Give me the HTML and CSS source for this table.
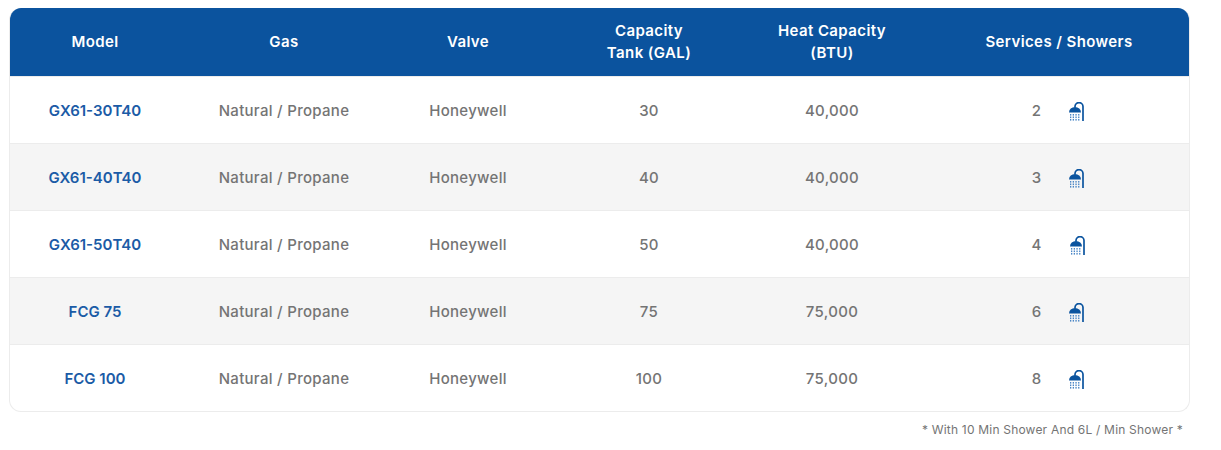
FILE: index.html
```html
<!DOCTYPE html>
<html>
<head>
<meta charset="utf-8">
<link rel="stylesheet" href="styles.css">
</head>
<body>
<div class="wrap">
  <div class="card">
    <div class="row head">
      <div class="cell">Model</div>
      <div class="cell">Gas</div>
      <div class="cell">Valve</div>
      <div class="cell">Capacity<br>Tank (GAL)</div>
      <div class="cell">Heat Capacity<br>(BTU)</div>
      <div class="cell svc">Services / Showers</div>
    </div>
    <div class="row">
      <div class="cell model">GX61-30T40</div>
      <div class="cell">Natural / Propane</div>
      <div class="cell">Honeywell</div>
      <div class="cell">30</div>
      <div class="cell">40,000</div>
      <div class="cell svc"><span class="num">2</span><svg class="shower" viewBox="0 0 18 19" width="18" height="19"><path d="M7 5.5V4.6a4 4 0 0 1 8 0V19" fill="none" stroke="#0b549f" stroke-width="1.7"/><path d="M1 10.5a6 5.5 0 0 1 12 0z" fill="#0b549f"/><g fill="#4a86c6"><rect x="2" y="12" width="1.3" height="1.6"/><rect x="4.7" y="12" width="1.3" height="1.6"/><rect x="7.4" y="12" width="1.3" height="1.6"/><rect x="10.1" y="12" width="1.3" height="1.6"/><rect x="2" y="14.5" width="1.3" height="1.6"/><rect x="4.7" y="14.5" width="1.3" height="1.6"/><rect x="7.4" y="14.5" width="1.3" height="1.6"/><rect x="10.1" y="14.5" width="1.3" height="1.6"/><rect x="2" y="17" width="1.3" height="1.6"/><rect x="4.7" y="17" width="1.3" height="1.6"/><rect x="7.4" y="17" width="1.3" height="1.6"/><rect x="10.1" y="17" width="1.3" height="1.6"/></g></svg></div>
    </div>
    <div class="row alt">
      <div class="cell model">GX61-40T40</div>
      <div class="cell">Natural / Propane</div>
      <div class="cell">Honeywell</div>
      <div class="cell">40</div>
      <div class="cell">40,000</div>
      <div class="cell svc"><span class="num">3</span><svg class="shower" viewBox="0 0 18 19" width="18" height="19"><path d="M7 5.5V4.6a4 4 0 0 1 8 0V19" fill="none" stroke="#0b549f" stroke-width="1.7"/><path d="M1 10.5a6 5.5 0 0 1 12 0z" fill="#0b549f"/><g fill="#4a86c6"><rect x="2" y="12" width="1.3" height="1.6"/><rect x="4.7" y="12" width="1.3" height="1.6"/><rect x="7.4" y="12" width="1.3" height="1.6"/><rect x="10.1" y="12" width="1.3" height="1.6"/><rect x="2" y="14.5" width="1.3" height="1.6"/><rect x="4.7" y="14.5" width="1.3" height="1.6"/><rect x="7.4" y="14.5" width="1.3" height="1.6"/><rect x="10.1" y="14.5" width="1.3" height="1.6"/><rect x="2" y="17" width="1.3" height="1.6"/><rect x="4.7" y="17" width="1.3" height="1.6"/><rect x="7.4" y="17" width="1.3" height="1.6"/><rect x="10.1" y="17" width="1.3" height="1.6"/></g></svg></div>
    </div>
    <div class="row">
      <div class="cell model">GX61-50T40</div>
      <div class="cell">Natural / Propane</div>
      <div class="cell">Honeywell</div>
      <div class="cell">50</div>
      <div class="cell">40,000</div>
      <div class="cell svc"><span class="num">4</span><svg class="shower" viewBox="0 0 18 19" width="18" height="19"><path d="M7 5.5V4.6a4 4 0 0 1 8 0V19" fill="none" stroke="#0b549f" stroke-width="1.7"/><path d="M1 10.5a6 5.5 0 0 1 12 0z" fill="#0b549f"/><g fill="#4a86c6"><rect x="2" y="12" width="1.3" height="1.6"/><rect x="4.7" y="12" width="1.3" height="1.6"/><rect x="7.4" y="12" width="1.3" height="1.6"/><rect x="10.1" y="12" width="1.3" height="1.6"/><rect x="2" y="14.5" width="1.3" height="1.6"/><rect x="4.7" y="14.5" width="1.3" height="1.6"/><rect x="7.4" y="14.5" width="1.3" height="1.6"/><rect x="10.1" y="14.5" width="1.3" height="1.6"/><rect x="2" y="17" width="1.3" height="1.6"/><rect x="4.7" y="17" width="1.3" height="1.6"/><rect x="7.4" y="17" width="1.3" height="1.6"/><rect x="10.1" y="17" width="1.3" height="1.6"/></g></svg></div>
    </div>
    <div class="row alt">
      <div class="cell model">FCG 75</div>
      <div class="cell">Natural / Propane</div>
      <div class="cell">Honeywell</div>
      <div class="cell">75</div>
      <div class="cell">75,000</div>
      <div class="cell svc"><span class="num">6</span><svg class="shower" viewBox="0 0 18 19" width="18" height="19"><path d="M7 5.5V4.6a4 4 0 0 1 8 0V19" fill="none" stroke="#0b549f" stroke-width="1.7"/><path d="M1 10.5a6 5.5 0 0 1 12 0z" fill="#0b549f"/><g fill="#4a86c6"><rect x="2" y="12" width="1.3" height="1.6"/><rect x="4.7" y="12" width="1.3" height="1.6"/><rect x="7.4" y="12" width="1.3" height="1.6"/><rect x="10.1" y="12" width="1.3" height="1.6"/><rect x="2" y="14.5" width="1.3" height="1.6"/><rect x="4.7" y="14.5" width="1.3" height="1.6"/><rect x="7.4" y="14.5" width="1.3" height="1.6"/><rect x="10.1" y="14.5" width="1.3" height="1.6"/><rect x="2" y="17" width="1.3" height="1.6"/><rect x="4.7" y="17" width="1.3" height="1.6"/><rect x="7.4" y="17" width="1.3" height="1.6"/><rect x="10.1" y="17" width="1.3" height="1.6"/></g></svg></div>
    </div>
    <div class="row">
      <div class="cell model">FCG 100</div>
      <div class="cell">Natural / Propane</div>
      <div class="cell">Honeywell</div>
      <div class="cell">100</div>
      <div class="cell">75,000</div>
      <div class="cell svc"><span class="num">8</span><svg class="shower" viewBox="0 0 18 19" width="18" height="19"><path d="M7 5.5V4.6a4 4 0 0 1 8 0V19" fill="none" stroke="#0b549f" stroke-width="1.7"/><path d="M1 10.5a6 5.5 0 0 1 12 0z" fill="#0b549f"/><g fill="#4a86c6"><rect x="2" y="12" width="1.3" height="1.6"/><rect x="4.7" y="12" width="1.3" height="1.6"/><rect x="7.4" y="12" width="1.3" height="1.6"/><rect x="10.1" y="12" width="1.3" height="1.6"/><rect x="2" y="14.5" width="1.3" height="1.6"/><rect x="4.7" y="14.5" width="1.3" height="1.6"/><rect x="7.4" y="14.5" width="1.3" height="1.6"/><rect x="10.1" y="14.5" width="1.3" height="1.6"/><rect x="2" y="17" width="1.3" height="1.6"/><rect x="4.7" y="17" width="1.3" height="1.6"/><rect x="7.4" y="17" width="1.3" height="1.6"/><rect x="10.1" y="17" width="1.3" height="1.6"/></g></svg></div>
    </div>
  </div>
  <p class="note">* With 10 Min Shower And 6L / Min Shower *</p>
</div>
</body>
</html>
```

FILE: styles.css
```css
html, body {
  margin: 0;
  padding: 0;
  background: #fff;
}
body {
  font-family: Inter, "Open Sans", "Liberation Sans", sans-serif;
  color: #747474;
}
.wrap {
  width: 1181px;
  padding: 8px 0 0 9px;
}
.card {
  border: 1px solid #ececec;
  border-top: none;
  border-radius: 12px;
  overflow: hidden;
  background: #fff;
}
.row {
  display: grid;
  grid-template-columns: 170px 208px 160px 202px 164px 1fr;
  height: 67px;
  padding-top: 1px;
  border-top: 1px solid #ececec;
  box-sizing: border-box;
  font-size: 15px;
  font-weight: 500;
  letter-spacing: 0.3px;
}
.row.alt {
  background: #f5f5f5;
}
.row.head {
  height: 68px;
  padding-top: 0;
  background: #0b539e;
  color: #fff;
  border-top: none;
  font-weight: 600;
  font-size: 15px;
  line-height: 22px;
  letter-spacing: 0.4px;
}
.cell {
  display: flex;
  align-items: center;
  justify-content: center;
  text-align: center;
}
.cell.svc {
  padding-left: 15px;
  gap: 27px;
}
.cell.model {
  color: #1b5ba6;
  font-weight: 600;
  letter-spacing: 0;
}
.shower {
  display: block;
  margin-top: 1px;
}
.note {
  margin: 10px 7px 0 0;
  text-align: right;
  font-size: 12px;
  letter-spacing: 0.2px;
  color: #747474;
}
```
